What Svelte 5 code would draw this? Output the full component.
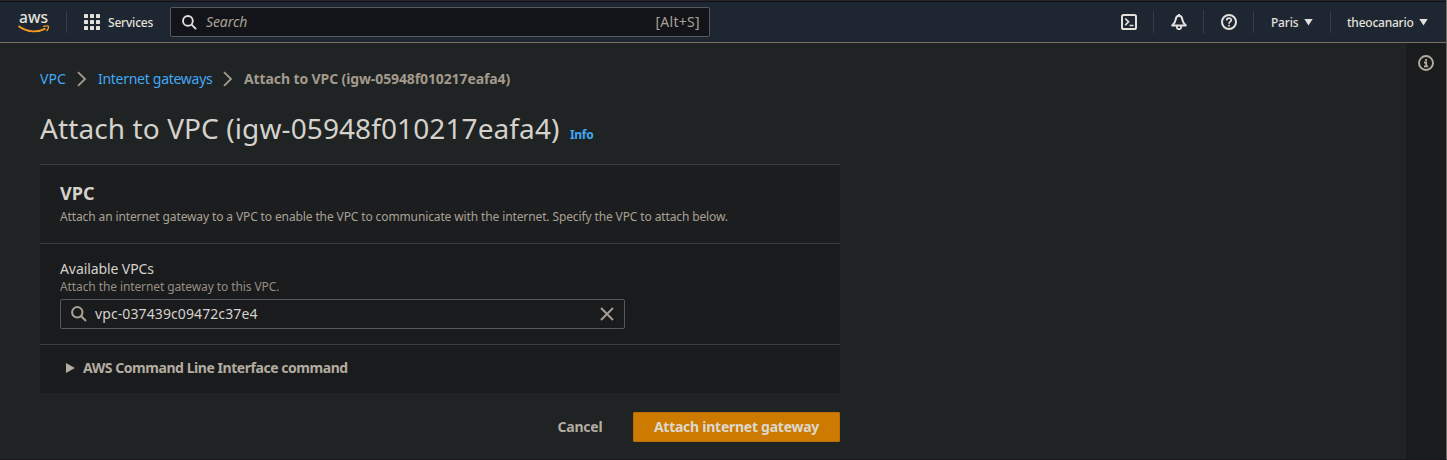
<svelte:head><title>Attach to VPC</title></svelte:head>

{#snippet search(size)}
  <svg class="glass" width={size} height={size} viewBox="0 0 16 16" fill="none" stroke="currentColor" stroke-width="2">
    <circle cx="6.3" cy="6.3" r="5.2" /><path d="M10 10 15 15" />
  </svg>
{/snippet}

{#snippet chevron()}
  <svg class="chevron" width="10" height="16" viewBox="0 0 10 16" fill="none" stroke="currentColor" stroke-width="1.8">
    <path d="M1 1.2 8 8 1 14.8" />
  </svg>
{/snippet}

<div class="page">
  <header>
    <svg class="logo" width="34" height="36" viewBox="0 0 34 36">
      <text x="2" y="19" textLength="29" lengthAdjust="spacingAndGlyphs">aws</text>
      <path d="M1.500 22C10 28.600 21 28.600 28.500 24.600" fill="none" stroke="#f79a22" stroke-width="1.800" />
      <path d="M26 22.500C28.500 21.500 31.200 21.700 31.500 22.300C31.700 23.500 31 25.400 29.600 27" fill="none" stroke="#f79a22" stroke-width="1.300" />
    </svg>
    <i class="rule first"></i>
    <svg class="grid" width="16" height="16" viewBox="0 0 16 16" fill="currentColor">
      {#each [0, 6, 12] as y}{#each [0, 6, 12] as x}<rect {x} {y} width="4" height="4" rx=".6" />{/each}{/each}
    </svg>
    <span class="services">Services</span>
    <div class="searchbar">{@render search(15)}<em>Search</em><span>[Alt+S]</span></div>
    <div class="tools">
      <div class="tool">
        <svg width="16" height="16" viewBox="0 0 16 16" fill="none" stroke="currentColor" stroke-width="2">
          <rect x="1" y="1" width="14" height="14" rx="1.600" /><path d="M4.200 4.500 7.600 7.800 4.200 11.200M8.500 11.500H12.500" stroke-width="1.700" />
        </svg>
      </div>
      <i class="rule"></i>
      <div class="tool">
        <svg width="16" height="16" viewBox="0 0 16 16" fill="none" stroke="currentColor" stroke-width="2" stroke-linejoin="round">
          <path d="M8 1.800C5.800 1.800 5 3.300 4.700 5.300C4.400 7.800 3.700 9.300 1.200 11.500H14.800C12.300 9.300 11.600 7.800 11.300 5.300C11 3.300 10.200 1.800 8 1.800ZM8 0V1.500" /><path d="M5.900 12V13.200C5.900 15.800 10.100 15.800 10.100 13.200V12" stroke-width="1.800" />
        </svg>
      </div>
      <i class="rule tall"></i>
      <div class="tool">
        <svg width="16" height="16" viewBox="0 0 16 16" fill="none" stroke="currentColor" stroke-width="2">
          <circle cx="8" cy="8" r="7" /><path d="M5.700 6.500C5.700 3.400 10.300 3.500 10.300 6.100C10.300 7.700 8 7.600 8 9.700M8 10.700V12.400" stroke-width="1.700" />
        </svg>
      </div>
      <i class="rule"></i>
      <div class="menu paris"><span>Paris</span><i class="down"></i></div>
      <i class="rule"></i>
      <div class="menu user"><span>theocanario</span><i class="down"></i></div>
    </div>
  </header>

  <div class="body">
    <main>
      <nav><a class="vpc" href="#vpc">VPC</a>{@render chevron()}<a class="gateways" href="#gateways">Internet gateways</a>{@render chevron()}<b>Attach to VPC (igw-05948f010217eafa4)</b></nav>
      <div class="title"><h1>Attach to VPC (igw-05948f010217eafa4)</h1><a href="#info">Info</a></div>
      <section>
        <div class="head">
          <h2>VPC</h2>
          <p>Attach an internet gateway to a VPC to enable the VPC to communicate with the internet. Specify the VPC to attach below.</p>
        </div>
        <div class="field">
          <label for="vpc">Available VPCs</label>
          <p>Attach the internet gateway to this VPC.</p>
          <div class="input" id="vpc">
            {@render search(16)}<span>vpc-037439c09472c37e4</span>
            <svg class="clear" width="14" height="14" viewBox="0 0 14 14" stroke="currentColor" stroke-width="1.800"><path d="M1 1 13 13M13 1 1 13" /></svg>
          </div>
        </div>
        <div class="cli"><i></i><b>AWS Command Line Interface command</b></div>
      </section>
      <div class="actions"><button class="cancel">Cancel</button><button class="primary">Attach internet gateway</button></div>
    </main>
    <aside>
      <svg width="16" height="16" viewBox="0 0 16 16" fill="none" stroke="currentColor" stroke-width="1.900">
        <circle cx="8" cy="8" r="7" /><path d="M8 4V6M6 7.500H8.200V11.200M6 11.400H10.200" stroke-width="1.800" />
      </svg>
    </aside>
  </div>
</div>

<style>
  :global(body) { background: #1f2324; }
  * { box-sizing: border-box; }
  .page { height: 460px; display: flex; flex-direction: column; overflow: hidden; background: #1f2324; border-right: 1px solid #6d6e6a; border-bottom: 1px solid #1a181b; font: 14px/22px 'Noto Sans', sans-serif; color: #d5d1cb; }
  svg { display: block; flex: none; }
  i { flex: none; }
  a { color: #42a9f5; text-decoration: none; }
  h1, h2, p { margin: 0; }
  header { height: 43px; flex: none; display: flex; align-items: center; padding: 1px 0 0 17px; background: #1d2631; border-top: 1px solid #27262b; border-bottom: 1px solid #76705f; color: #e4e1dc; box-shadow: inset 0 1px #0d0f14; }
  .logo text { font: 500 17px 'Noto Sans', sans-serif; fill: #e4e1dc; }
  .rule { width: 1px; height: 22px; background: #383d42; }
  .rule.tall { height: 24px; }
  .rule.first { margin: 0 17px 0 15px; }
  .services { margin-left: 8px; padding-top: 2px; font-size: 12px; font-weight: 500; letter-spacing: -.2px; width: 46px; white-space: nowrap; }
  .searchbar { margin-left: 16px; width: 540px; height: 30px; display: flex; align-items: center; padding: 0 9px 0 11px; border: 1px solid #565b5d; border-radius: 2px; background: #131419; }
  .searchbar em { margin-left: 9px; color: #a9a195; letter-spacing: -.1px; }
  .searchbar span { margin-left: auto; color: #a9a195; letter-spacing: .3px; }
  .tools { display: flex; align-items: center; margin-left: auto; }
  .tool { display: flex; padding: 0 16px 0 17px; }
  .menu { display: flex; align-items: center; font-size: 12px; font-weight: 500; }
  .menu span { padding-top: 2px; }
  .down { width: 9px; height: 7px; margin-left: 6px; background: currentColor; clip-path: polygon(0 0, 100% 0, 50% 100%); }
  .paris { padding: 0 17px 0 17px; }
  .paris span { width: 27px; letter-spacing: -.2px; }
  .user { padding: 0 18px 0 16px; }
  .user span { width: 66px; letter-spacing: -.24px; }
  .body { flex: 1; display: flex; min-height: 0; }
  main { flex: 1; padding: 25px 0 0 40px; }
  aside { width: 40px; padding: 12px 0 0 12px; background: #1a1b1d; color: #b3aca0; }
  nav { display: flex; align-items: center; height: 22px; color: #a39a8c; white-space: nowrap; }
  .vpc { width: 26px; letter-spacing: .1px; }
  .chevron { margin: 0 11px 0 11px; }
  .gateways { letter-spacing: -.28px; width: 114px; }
  nav b { letter-spacing: -.11px; }
  .title { display: flex; align-items: baseline; height: 36px; margin-top: 20px; }
  h1 { font-size: 28px; line-height: 36px; font-weight: 400; letter-spacing: .1px; width: 520px; white-space: nowrap; }
  .title a { margin-left: 10px; font-size: 12px; font-weight: 700; letter-spacing: -.3px; }
  section { width: 800px; height: 229px; margin-top: 18px; background: #1a1b1d; border-top: 1px solid #3a3e40; }
  .head { height: 79px; padding: 17px 20px 0; background: #1c1d1f; border-bottom: 1px solid #3a3e40; }
  h2 { font-size: 18px; line-height: 22px; }
  p { font-size: 12px; line-height: 22px; letter-spacing: -.12px; color: #a9a195; white-space: nowrap; }
  .head p { margin-top: 2px; }
  .field { height: 101px; padding: 14px 20px 0; border-bottom: 1px solid #3a3e40; }
  label { display: block; letter-spacing: -.09px; }
  .field p { margin-top: -2px; line-height: 18px; letter-spacing: -.1px; color: #968e82; }
  .input { width: 565px; height: 30px; margin-top: 3px; display: flex; align-items: center; padding: 0 10px; border: 1px solid #55595a; border-radius: 2px; color: #a9a195; }
  .input span { margin-left: 8px; color: #d5d1cb; letter-spacing: .1px; }
  .clear { margin-left: auto; }
  .cli { display: flex; align-items: center; height: 46px; padding-left: 26px; color: #b3aca0; }
  .cli i { width: 9px; height: 10px; margin-right: 8px; background: currentColor; clip-path: polygon(0 0, 100% 50%, 0 100%); }
  .cli b { letter-spacing: -.45px; }
  .actions { display: flex; justify-content: flex-end; width: 800px; margin-top: 19px; }
  button { height: 30px; border: 1px solid transparent; border-radius: 1px; padding: 0; font: 700 14px/22px 'Noto Sans', sans-serif; background: none; color: #b3aca0; white-space: nowrap; }
  .cancel { width: 86px; margin-right: 10px; letter-spacing: -.24px; }
  .primary { width: 207px; background: #cc7a00; border-color: #b96f05; color: #ddd8cf; letter-spacing: -.26px; }
</style>
